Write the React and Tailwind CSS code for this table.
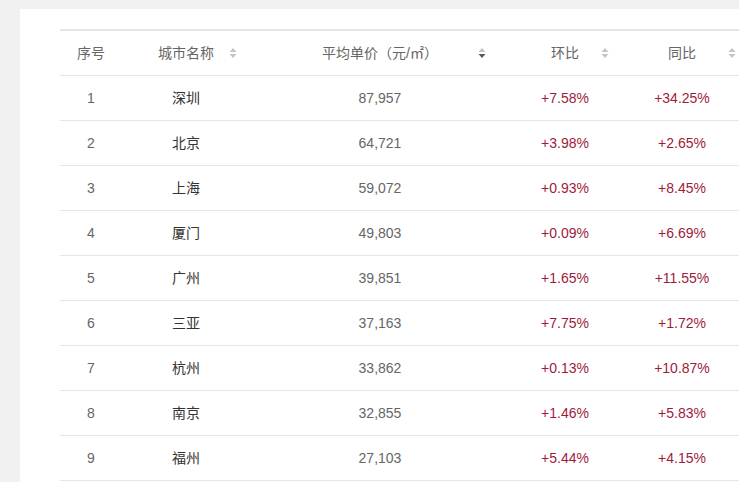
import React from "react";

const rows = [
  ["1", "深圳", "87,957", "+7.58%", "+34.25%"],
  ["2", "北京", "64,721", "+3.98%", "+2.65%"],
  ["3", "上海", "59,072", "+0.93%", "+8.45%"],
  ["4", "厦门", "49,803", "+0.09%", "+6.69%"],
  ["5", "广州", "39,851", "+1.65%", "+11.55%"],
  ["6", "三亚", "37,163", "+7.75%", "+1.72%"],
  ["7", "杭州", "33,862", "+0.13%", "+10.87%"],
  ["8", "南京", "32,855", "+1.46%", "+5.83%"],
  ["9", "福州", "27,103", "+5.44%", "+4.15%"],
];

function SortIcon({ active }) {
  return (
    <svg width="8" height="11" viewBox="0 0 8 11">
      <path d="M4 0.5 L7.5 4.5 L0.5 4.5 Z" fill="#c4c4c4" />
      <path d="M4 10.5 L7.5 6.5 L0.5 6.5 Z" fill={active ? "#5a5a5a" : "#c4c4c4"} />
    </svg>
  );
}

const cols = "grid grid-cols-[62px_128px_260px_110px_124px]";

export default function App() {
  return (
    <div
      className="w-[739px] h-[482px] overflow-hidden bg-[#f1f1f1] pl-[20px] pt-[9px]"
      style={{ fontFamily: '"Liberation Sans", Arial, "Noto Sans CJK SC", sans-serif' }}
    >
      <div className="bg-white h-full pl-[40px] pt-[20px]">
        <div className="w-[684px] text-[14px]">
          <div className={`${cols} h-[47px] border-t-2 border-b border-[#e6e6e6] text-[#666]`}>
            <div className="flex items-center justify-center">序号</div>
            <div className="relative flex items-center justify-center">
              城市名称
              <span className="absolute right-[13px] top-1/2 -translate-y-1/2 flex"><SortIcon /></span>
            </div>
            <div className="relative flex items-center justify-center pl-[2px] pr-[2px]">
              平均单价（元/㎡）
              <span className="absolute right-[24px] top-1/2 -translate-y-1/2 flex"><SortIcon active /></span>
            </div>
            <div className="relative flex items-center justify-center">
              环比
              <span className="absolute right-[11px] top-1/2 -translate-y-1/2 flex"><SortIcon /></span>
            </div>
            <div className="relative flex items-center justify-center">
              同比
              <span className="absolute right-[8px] top-1/2 -translate-y-1/2 flex"><SortIcon /></span>
            </div>
          </div>
          {rows.map((r) => (
            <div key={r[0]} className={`${cols} h-[45px] border-b border-[#e6e6e6]`}>
              <div className="flex items-center justify-center text-[#666]">{r[0]}</div>
              <div className="flex items-center justify-center text-[#333]">{r[1]}</div>
              <div className="flex items-center justify-center text-[#666]">{r[2]}</div>
              <div className="flex items-center justify-center text-[#9e1b3b]">{r[3]}</div>
              <div className="flex items-center justify-center text-[#9e1b3b]">{r[4]}</div>
            </div>
          ))}
        </div>
      </div>
    </div>
  );
}
